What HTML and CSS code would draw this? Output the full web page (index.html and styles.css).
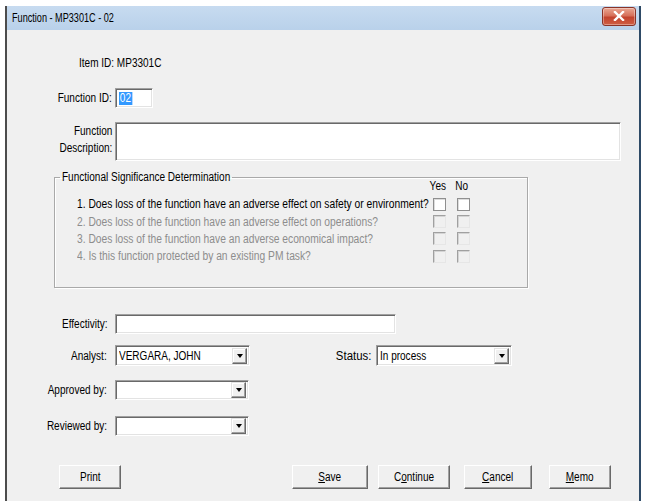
FILE: index.html
```html
<!DOCTYPE html>
<html>
<head>
<meta charset="utf-8">
<title>Function - MP3301C - 02</title>
<link rel="stylesheet" href="styles.css">
</head>
<body>
<div class="window">
  <div class="titlebar">
    <span class="title t tl">Function - MP3301C - 02</span>
    <span class="close">
      <svg width="12" height="10" viewBox="0 0 12 10"><path d="M2 1 L10 9 M10 1 L2 9" stroke="#fff" stroke-width="2.4" stroke-linecap="square"/></svg>
    </span>
  </div>
  <div class="content">
    <div class="item-id"><span class="t tl">Item ID: MP3301C</span></div>

    <div class="row r-fid">
      <span class="lbl lbl-a"><span class="t tr">Function ID:</span></span>
      <div class="field fid"><span class="sel t tl">02</span></div>
    </div>

    <div class="row r-desc">
      <span class="lbl lbl-a two"><span class="t tr">Function<br>Description:</span></span>
      <div class="field desc"></div>
    </div>

    <fieldset class="group">
      <legend><span class="t tl legend-t">Functional Significance Determination</span></legend>
      <div class="qgrid">
        <span></span><span class="hd t tc">Yes</span><span class="hd t tc">No</span>
        <span class="q"><span class="t tl">1. Does loss of the function have an adverse effect on safety or environment?</span></span><span class="cb"></span><span class="cb"></span>
        <span class="q dis"><span class="t tl">2. Does loss of the function have an adverse effect on operations?</span></span><span class="cb off"></span><span class="cb off"></span>
        <span class="q dis"><span class="t tl">3. Does loss of the function have an adverse economical impact?</span></span><span class="cb off"></span><span class="cb off"></span>
        <span class="q dis"><span class="t tl">4. Is this function protected by an existing PM task?</span></span><span class="cb off"></span><span class="cb off"></span>
      </div>
    </fieldset>

    <div class="row r-eff">
      <span class="lbl lbl-b"><span class="t tr">Effectivity:</span></span>
      <div class="field eff"></div>
    </div>

    <div class="row r-analyst">
      <span class="lbl lbl-b"><span class="t tr">Analyst:</span></span>
      <div class="field combo wide"><span class="val t tl">VERGARA, JOHN</span><span class="drop"><i></i></span></div>
      <span class="lbl status-lbl"><span class="t tr st">Status:</span></span>
      <div class="field combo status"><span class="val t tl">In process</span><span class="drop"><i></i></span></div>
    </div>

    <div class="row r-appr">
      <span class="lbl lbl-b"><span class="t tr">Approved by:</span></span>
      <div class="field combo short"><span class="val"></span><span class="drop"><i></i></span></div>
    </div>

    <div class="row r-rev">
      <span class="lbl lbl-b"><span class="t tr">Reviewed by:</span></span>
      <div class="field combo short"><span class="val"></span><span class="drop"><i></i></span></div>
    </div>

    <div class="buttons">
      <span class="btn print"><span class="t tc">Print</span></span>
      <span class="spacer"></span>
      <span class="btn save"><span class="t tc"><u>S</u>ave</span></span>
      <span class="btn cont"><span class="t tc">C<u>o</u>ntinue</span></span>
      <span class="btn cancel"><span class="t tc"><u>C</u>ancel</span></span>
      <span class="btn memo"><span class="t tc"><u>M</u>emo</span></span>
    </div>
  </div>
</div>
</body>
</html>
```

FILE: styles.css
```css
html, body {
  margin: 0;
  padding: 0;
  background: #ffffff;
}
body {
  padding: 6px 6px 0 5px;
  font-family: "Liberation Sans", Arial, sans-serif;
  font-size: 12px;
  color: #000;
}
/* the dialog font is a narrow one: squeeze the glyphs horizontally */
.t {
  display: inline-block;
  transform: scaleX(0.835);
  white-space: nowrap;
}
.tl { transform-origin: left center; }
.tr { transform-origin: right center; }
.tc { transform-origin: center center; }

.window {
  height: 495px;
  border-left: 2px solid #4c4c4c;
  border-right: 2px solid #2e4a66;
  display: flex;
  flex-direction: column;
  overflow: hidden;
}
.titlebar {
  height: 24px;
  flex: none;
  background: linear-gradient(#c7dbf0, #b9d1ea);
  display: flex;
  align-items: center;
  justify-content: space-between;
  padding: 0 3px 0 5px;
}
.title {
  font-size: 12.5px;
  transform: scaleX(0.73);
  color: #000;
}
.close {
  width: 32px;
  height: 17px;
  margin-top: -4px;
  border: 1px solid #8a3327;
  border-radius: 3px;
  background: linear-gradient(#e9a793, #d7705a 45%, #c3432e 55%, #cf5f43);
  display: flex;
  align-items: center;
  justify-content: center;
  box-shadow: inset 0 0 0 1px rgba(255,255,255,0.35);
}
.content {
  flex: 1;
  background: #f0f0f0;
  padding-top: 26px;
}
.item-id {
  margin-left: 72px;
  line-height: 14px;
  height: 14px;
}
.row {
  display: flex;
  align-items: center;
}
.lbl {
  text-align: right;
  flex: none;
}
.lbl-a {
  width: 105px;
  margin-right: 3px;
}
.lbl-b {
  width: 100px;
  margin-right: 8px;
}
.two {
  line-height: 17px;
  align-self: flex-start;
  margin-top: 1px;
}
.field {
  box-sizing: border-box;
  background: #fff;
  border-top: 1px solid #a0a0a0;
  border-left: 1px solid #a0a0a0;
  border-right: 1px solid #ffffff;
  border-bottom: 1px solid #ffffff;
  box-shadow: inset 1px 1px 0 #696969, inset -1px -1px 0 #e3e3e3;
  flex: none;
}
.r-fid { margin-top: 18px; }
.fid {
  width: 38px;
  height: 20px;
  padding: 2px 0 0 3px;
}
.sel {
  background: #3399ff;
  color: #fff;
  line-height: 13px;
  padding: 0 2px 0 1px;
}
.r-desc { margin-top: 14px; }
.desc {
  width: 506px;
  height: 39px;
}
.group {
  margin: 10px 0 0 47px;
  width: 474px;
  height: 117px;
  box-sizing: border-box;
  padding: 0;
  border: 1px solid #a9a9a9;
  box-shadow: inset 1px 1px 0 #fff, 1px 1px 0 #fff;
}
.group legend {
  margin-left: 5px;
  padding: 0 2px;
  line-height: 12px;
}
.legend-t {
  margin-right: -33px;
}
.qgrid {
  display: grid;
  grid-template-columns: 345px 13px 13px;
  grid-template-rows: 18px 18px 17px 17px 18px;
  column-gap: 11px;
  align-items: center;
  padding-left: 22px;
  margin-top: -6px;
}
.hd {
  justify-self: center;
  margin-left: -4px;
}
.q {
  white-space: nowrap;
  min-width: 0;
}
.q .t { transform: scaleX(0.855); }
.dis { color: #8d8d8d; }
.cb {
  width: 13px;
  height: 13px;
  box-sizing: border-box;
  background: #fff;
  border: 1px solid #8f8f8f;
  box-shadow: inset 1px 1px 0 #dcdcdc;
}
.cb.off {
  background: #f0f0f0;
  border-top: 1px solid #a0a0a0;
  border-left: 1px solid #a0a0a0;
  border-right: 1px solid #e6e6e6;
  border-bottom: 1px solid #e6e6e6;
  box-shadow: inset 1px 1px 0 #d4d4d4;
}
.r-eff { margin-top: 26px; }
.eff {
  width: 281px;
  height: 20px;
}
.r-analyst { margin-top: 11px; }
.combo {
  height: 21px;
  display: flex;
  align-items: center;
  justify-content: space-between;
  padding: 2px 2px 2px 3px;
}
.wide { width: 135px; }
.short { width: 134px; height: 20px; }
.status-lbl {
  margin-left: 84px;
  margin-right: 5px;
}
.st { transform: scaleX(0.95); }
.status { width: 136px; }
.drop {
  width: 15px;
  height: 16px;
  box-sizing: border-box;
  background: #f0f0f0;
  border-top: 1px solid #e3e3e3;
  border-left: 1px solid #e3e3e3;
  border-right: 1px solid #696969;
  border-bottom: 1px solid #696969;
  box-shadow: inset -1px -1px 0 #a0a0a0, inset 1px 1px 0 #fff;
  display: flex;
  align-items: center;
  justify-content: center;
  flex: none;
}
.drop i {
  width: 0;
  height: 0;
  border-left: 3.5px solid transparent;
  border-right: 3.5px solid transparent;
  border-top: 4px solid #000;
}
.r-appr { margin-top: 14px; }
.r-rev { margin-top: 16px; }
.buttons {
  margin-top: 29px;
  display: flex;
  padding-left: 52px;
}
.spacer { flex: 1; }
.btn {
  box-sizing: border-box;
  height: 24px;
  display: flex;
  align-items: center;
  justify-content: center;
  background: #f0f0f0;
  border-top: 1px solid #fff;
  border-left: 1px solid #fff;
  border-right: 1px solid #696969;
  border-bottom: 1px solid #696969;
  box-shadow: inset -1px -1px 0 #a0a0a0;
  flex: none;
}
.btn u { text-decoration: underline; text-underline-offset: 1px; }
.print { width: 62px; }
.save { width: 76px; }
.cont { width: 72px; margin-left: 10px; }
.cancel { width: 68px; margin-left: 14px; }
.memo { width: 62px; margin-left: 17px; margin-right: 28px; }
```
